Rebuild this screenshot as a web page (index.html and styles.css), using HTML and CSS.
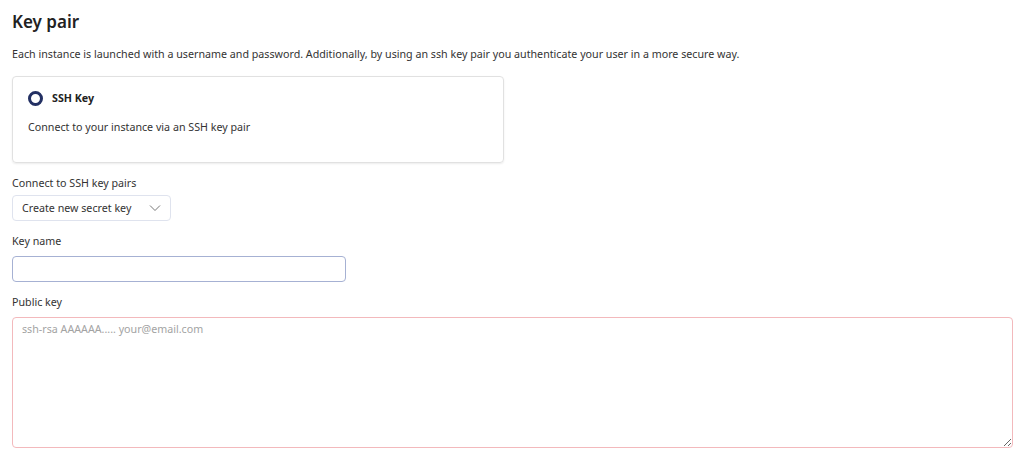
FILE: index.html
```html
<!DOCTYPE html>
<html>
<head>
<meta charset="utf-8">
<link rel="stylesheet" href="styles.css">
</head>
<body>
<section class="m-keyPair">
    <h2 class="u-title">Key pair</h2>
    <p class="u-desc">Each instance is launched with a username and password. Additionally, by using an ssh key pair you authenticate your user in a more secure way.</p>

    <label class="m-option">
        <span class="m-option-head">
            <span class="u-radio"></span>
            <span class="u-name">SSH Key</span>
        </span>
        <span class="m-option-text">Connect to your instance via an SSH key pair</span>
    </label>

    <div class="m-field">
        <div class="u-label">Connect to SSH key pairs</div>
        <div class="u-select">
            <span>Create new secret key</span>
            <svg width="12" height="8" viewBox="0 0 12 8"><path d="M1 1.5 6 6.5 11 1.5" fill="none" stroke="#777" stroke-width="1"/></svg>
        </div>
    </div>

    <div class="m-field">
        <div class="u-label">Key name</div>
        <input class="u-input" type="text">
    </div>

    <div class="m-field">
        <div class="u-label">Public key</div>
        <textarea class="u-textarea" placeholder="ssh-rsa AAAAAA..... your@email.com"></textarea>
    </div>
</section>
</body>
</html>
```

FILE: styles.css
```css
body {margin: 0; padding: 0 12px; font: 10.7px/1.4 "Noto Sans", "Open Sans", sans-serif; color: #2b2b2b; background: #fff;}
.m-keyPair {display: flex; flex-direction: column;}
.u-title {margin: 11px 0 0; font-size: 17px; line-height: 22px; font-weight: 600; color: #222;}
.u-desc {margin: 13px 0 0; line-height: 16px; color: #333;}

.m-option {display: flex; flex-direction: column; box-sizing: border-box; width: 492px; height: 87px; margin-top: 14px; padding: 14px 15px 0; border: 1px solid #e1e1e1; border-radius: 4px; box-shadow: 0 1px 2px rgba(0,0,0,.08);}
.m-option-head {display: flex; align-items: center; gap: 9px;}
.u-radio {box-sizing: border-box; width: 15px; height: 15px; border: 3px solid #233063; border-radius: 50%;}
.u-name {font-weight: 700; color: #222;}
.m-option-text {margin-top: 14px; color: #333;}

.m-field {display: flex; flex-direction: column; align-items: flex-start; margin-top: 12px;}
.u-label {line-height: 16px; color: #333; margin-bottom: 5px;}
.u-select {display: flex; align-items: center; justify-content: space-between; box-sizing: border-box; width: 159px; height: 26px; margin-top: -1px; padding: 0 9px; border: 1px solid #dfe3ee; border-radius: 4px; color: #333;}
.u-input {box-sizing: border-box; width: 334px; height: 26px; margin: 2px 0 0; border: 1px solid #a6b1d3; border-radius: 4px; outline: none;}
.u-textarea {box-sizing: border-box; width: 1001px; height: 131px; margin: 2px 0 0; padding: 4px 9px; border: 1px solid #f3b9bc; border-radius: 4px; font: inherit; color: #333; outline: none;}
.u-textarea::placeholder {color: #a3a3a3;}
```
